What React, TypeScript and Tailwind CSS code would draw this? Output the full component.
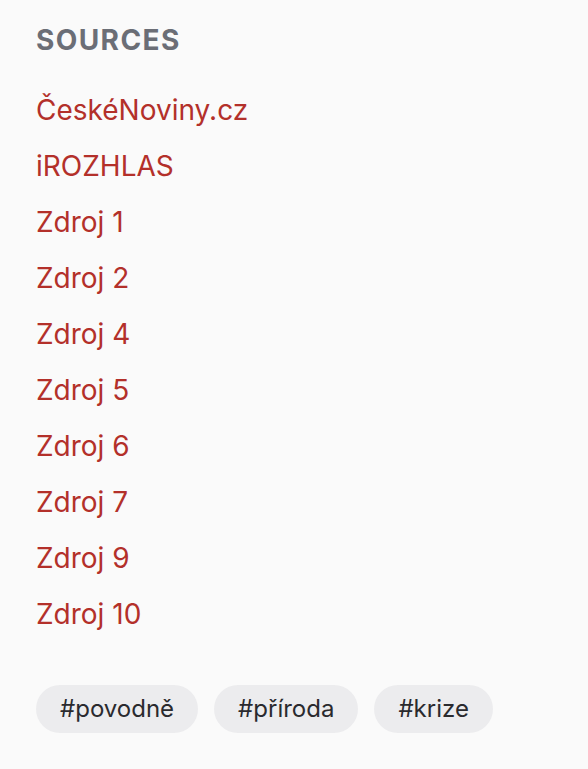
import React from 'react';

const sources = [
    'ČeskéNoviny.cz',
    'iROZHLAS',
    'Zdroj 1',
    'Zdroj 2',
    'Zdroj 4',
    'Zdroj 5',
    'Zdroj 6',
    'Zdroj 7',
    'Zdroj 9',
    'Zdroj 10',
];

const tags = ['#povodně', '#příroda', '#krize'];

const App: React.FC = () => {
    return (
        <div className="min-h-screen bg-[#fafafa] px-9 pt-6 font-['Inter',sans-serif]">
            <h2 className="text-[28px] leading-8 font-bold uppercase tracking-[0.05em] text-[#6b6e76]">Sources</h2>

            <ul className="mt-[34px] flex flex-col gap-4">
                {sources.map((s) => (
                    <li key={s}>
                        <a href="#" className="text-[28px] leading-10 text-[#b3302a]">
                            {s}
                        </a>
                    </li>
                ))}
            </ul>

            <div className="mt-[51px] flex gap-4">
                {tags.map((t) => (
                    <span
                        key={t}
                        className="h-12 flex items-center rounded-full bg-[#ececee] px-6 text-2xl text-[#2a2a2e]"
                    >
                        {t}
                    </span>
                ))}
            </div>
        </div>
    );
};

export default App;
